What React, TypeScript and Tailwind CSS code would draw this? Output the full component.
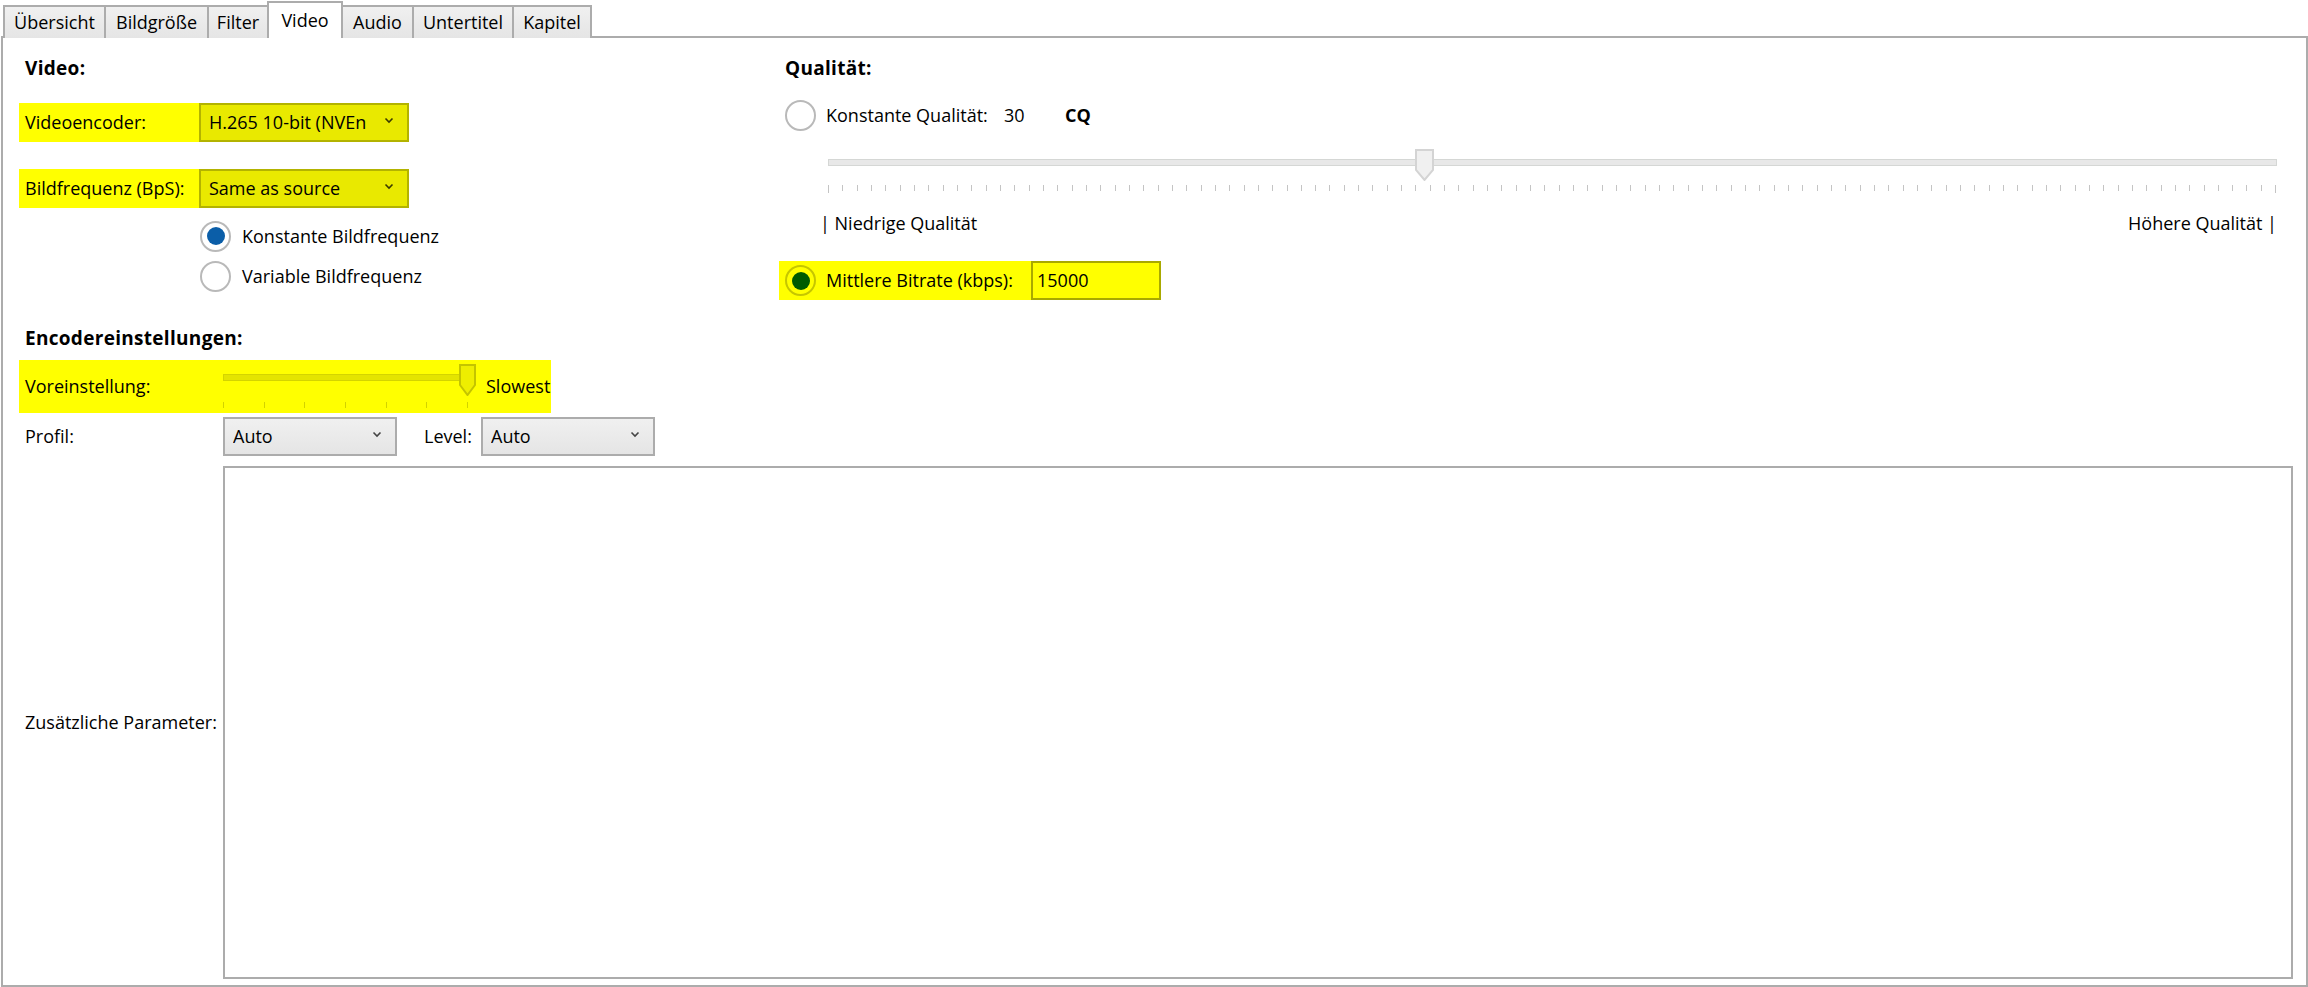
import React from "react";

const FONT = "font-['Open_Sans','Noto_Sans',sans-serif]";

function Chevron() {
  return (
    <svg width="10" height="7" viewBox="0 0 10 7" className="shrink-0 -mt-[5px]">
      <path d="M1.5 1.5L5 5L8.5 1.5" fill="none" stroke="currentColor" strokeWidth="1.6" />
    </svg>
  );
}

function Combo({ value, w, hot }: { value: string; w: string; hot?: boolean }) {
  return (
    <div
      className={`flex items-center justify-between h-[39px] ${w} shrink-0 border-2 pl-[8px] pr-[13px] ${
        hot
          ? "bg-[#e9e900] border-[#b3b300] text-[#3a3a00]"
          : "bg-gradient-to-b from-[#f0f0f0] to-[#e5e5e5] border-[#acacac] text-[#444]"
      }`}
    >
      <span className="text-black whitespace-nowrap overflow-hidden">{value}</span>
      <Chevron />
    </div>
  );
}

function Radio({ checked, hot }: { checked?: boolean; hot?: boolean }) {
  return (
    <div
      className={`w-[31px] h-[31px] shrink-0 rounded-full border-2 flex items-center justify-center ${
        hot ? "border-[#c6c600] bg-[#ffff00]" : "border-[#b9b9b9] bg-white"
      }`}
    >
      {checked && (
        <div className={`w-[18px] h-[18px] rounded-full ${hot ? "bg-[#005a00]" : "bg-[#0b5ea8]"}`} />
      )}
    </div>
  );
}

function Thumb({ w, h, fill, stroke }: { w: number; h: number; fill: string; stroke: string }) {
  return (
    <svg width={w} height={h} viewBox={`0 0 ${w} ${h}`}>
      <path
        d={`M1 1H${w - 1}V${h - 11}L${w / 2} ${h - 1}L1 ${h - 11}Z`}
        fill={fill}
        stroke={stroke}
        strokeWidth="2"
      />
    </svg>
  );
}

const tabs = [
  { label: "Übersicht", w: "w-[103px]" },
  { label: "Bildgröße", w: "w-[105px]" },
  { label: "Filter", w: "w-[62px]" },
  { label: "Video", w: "w-[76px]", active: true },
  { label: "Audio", w: "w-[73px]" },
  { label: "Untertitel", w: "w-[102px]" },
  { label: "Kapitel", w: "w-[80px]" },
];

export default function App() {
  const qualityTicks = Array.from({ length: 102 });
  const presetTicks = Array.from({ length: 7 });

  return (
    <div className={`${FONT} text-[18px] text-black bg-white w-[2308px] h-[987px] overflow-hidden pl-[1px]`}>
      {/* tab strip */}
      <div className="flex items-end h-[38px] pl-[2px]">
        {tabs.map((t, i) => (
          <div
            key={t.label}
            className={`${t.w} ${i > 0 ? "-ml-[2px]" : ""} flex justify-center border-2 border-b-0 border-[#acacac] ${
              t.active
                ? "relative z-10 h-[37px] bg-white pt-[3px]"
                : "h-[33px] bg-gradient-to-b from-[#f0f0f0] to-[#e5e5e5] pt-[1px]"
            }`}
          >
            <span className="leading-[28px] whitespace-nowrap">{t.label}</span>
          </div>
        ))}
      </div>

      {/* panel */}
      <div className="-mt-[2px] h-[951px] border-2 border-[#acacac] flex flex-col pl-[16px] pr-[13px] pt-[15px]">
        <div className="flex">
          {/* left column */}
          <div className="w-[760px] shrink-0 flex flex-col">
            <div className="h-[30px] flex items-center pl-[6px] font-bold text-[19px] tracking-[0.3px]">Video:</div>
            <div className="mt-[20px] flex">
              <div className="w-[180px] h-[39px] bg-[#ffff00] flex items-center pl-[6px]">Videoencoder:</div>
              <Combo value="H.265 10-bit (NVEn" w="w-[210px]" hot />
            </div>
            <div className="mt-[27px] flex">
              <div className="w-[180px] h-[39px] bg-[#ffff00] flex items-center pl-[6px] whitespace-nowrap">
                Bildfrequenz (BpS):
              </div>
              <Combo value="Same as source" w="w-[210px]" hot />
            </div>
            <div className="mt-[8px] h-[40px] flex items-center gap-[11px] pl-[181px]">
              <Radio checked />
              <span>Konstante Bildfrequenz</span>
            </div>
            <div className="h-[41px] flex items-center gap-[11px] pl-[181px]">
              <Radio />
              <span>Variable Bildfrequenz</span>
            </div>
          </div>

          {/* right column */}
          <div className="flex-1 flex flex-col">
            <div className="h-[30px] flex items-center pl-[6px] font-bold text-[19px] tracking-[0.3px]">Qualität:</div>
            <div className="mt-[14px] h-[36px] flex items-center pl-[6px]">
              <Radio />
              <span className="ml-[10px] w-[178px] whitespace-nowrap">Konstante Qualität:</span>
              <span className="w-[61px]">30</span>
              <span className="font-bold">CQ</span>
            </div>
            <div className="mt-[14px] h-[46px] relative ml-[49px] mr-[16px] flex flex-col">
              <div className="mt-[12px] h-[7px] border border-[#d5d7d5] bg-[#e8e8e8]" />
              <div className="mt-[19px] flex justify-between items-start">
                {qualityTicks.map((_, i) => (
                  <div
                    key={i}
                    className={`w-px bg-[#c4c4c4] ${i === 0 || i === qualityTicks.length - 1 ? "h-[8px]" : "h-[6px]"}`}
                  />
                ))}
              </div>
              <div className="absolute left-[587px] top-[2px]">
                <Thumb w={19} h={32} fill="#f0f0f0" stroke="#d4d4d4" />
              </div>
            </div>
            <div className="mt-[17px] h-[26px] flex items-center justify-between ml-[41px] mr-[16px]">
              <span>| Niedrige Qualität</span>
              <span>Höhere Qualität |</span>
            </div>
            <div className="mt-[25px] self-start flex items-center h-[39px] bg-[#ffff00] pl-[6px]">
              <Radio checked hot />
              <span className="ml-[10px] w-[205px] whitespace-nowrap">Mittlere Bitrate (kbps):</span>
              <div className="w-[130px] h-[39px] border-2 border-[#a9a900] bg-[#ffff00] flex items-center pl-[4px]">
                15000
              </div>
            </div>
          </div>
        </div>

        {/* encoder settings */}
        <div className="mt-[23px] h-[30px] flex items-center pl-[6px] font-bold text-[19px] tracking-[0.3px]">
          Encodereinstellungen:
        </div>
        <div className="mt-[7px] self-start flex items-center h-[53px] bg-[#ffff00] pr-[1px]">
          <div className="w-[204px] pl-[6px]">Voreinstellung:</div>
          <div className="relative w-[253px] h-full flex flex-col">
            <div className="mt-[14px] h-[7px] border border-[#d4d400] bg-[#e4e400]" />
            <div className="mt-[21px] w-[245px] flex justify-between">
              {presetTicks.map((_, i) => (
                <div key={i} className="w-px h-[6px] bg-[#d2d200]" />
              ))}
            </div>
            <div className="absolute left-[236px] top-[4px]">
              <Thumb w={17} h={32} fill="#eeee00" stroke="#c4c400" />
            </div>
          </div>
          <span className="ml-[10px]">Slowest</span>
        </div>
        <div className="mt-[4px] flex items-center h-[39px]">
          <div className="w-[204px] pl-[6px]">Profil:</div>
          <Combo value="Auto" w="w-[174px]" />
          <span className="ml-[27px] w-[57px]">Level:</span>
          <Combo value="Auto" w="w-[174px]" />
        </div>
        <div className="mt-[10px] flex items-center h-[513px]">
          <div className="w-[204px] shrink-0 pl-[6px] whitespace-nowrap">Zusätzliche Parameter:</div>
          <div className="flex-1 self-stretch border-2 border-[#acacac] bg-white" />
        </div>
      </div>
    </div>
  );
}
